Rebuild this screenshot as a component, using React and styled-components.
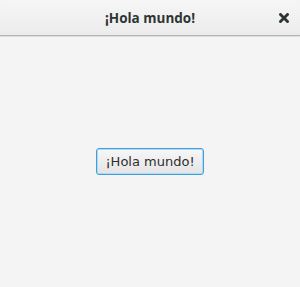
import React from 'react'
import styled, { createGlobalStyle } from 'styled-components';

const Global = createGlobalStyle`
    html, body {
        margin: 0;
        padding: 0;
        background: #f4f4f4;
    }
`;

const Window = styled.div`
    width: 300px;
    height: 287px;
    display: flex;
    flex-direction: column;
    background: #f4f4f4;
    overflow: hidden;
`;

const TitleBar = styled.div`
    height: 35px;
    flex-shrink: 0;
    display: grid;
    grid-template-columns: 40px 1fr 40px;
    align-items: center;
    background: linear-gradient(#f6f6f6, #ececec);
    border-bottom: 1px solid #b4b4b4;
    box-shadow: 0 1px 0 #e0e0e0;
    border-radius: 6px 6px 0 0;
`;

const Title = styled.div`
    grid-column: 2;
    text-align: center;
    font-family: "Open Sans", sans-serif;
    font-weight: 700;
    font-size: 13.5px;
    color: #2e3436;
`;

const Close = styled.div`
    display: flex;
    justify-content: center;
    align-items: center;
    padding-left: 8px;
    padding-top: 1px;
    color: #2e3436;
`;

const Body = styled.div`
    flex: 1;
    display: flex;
    justify-content: center;
    align-items: center;
`;

const Button = styled.button`
    height: 27px;
    padding: 0 8px;
    font-family: "DejaVu Sans", sans-serif;
    font-size: 13px;
    color: #2e2e2e;
    background: linear-gradient(#f7f7f7, #e4e4e4);
    border: 1px solid #3aa0de;
    border-radius: 3px;
    box-shadow: inset 0 0 0 1px #b6d8ee;
`;

function App() {
    return (
        <Window>
            <Global />
            <TitleBar>
                <Title>¡Hola mundo!</Title>
                <Close>
                    <svg width="10" height="10" viewBox="0 0 10 10">
                        <path d="M1.5 1.5 L8.5 8.5 M8.5 1.5 L1.5 8.5" stroke="#2e3436" strokeWidth="2.8" strokeLinecap="square" />
                    </svg>
                </Close>
            </TitleBar>
            <Body>
                <Button>¡Hola mundo!</Button>
            </Body>
        </Window>
    )
}

export default App
